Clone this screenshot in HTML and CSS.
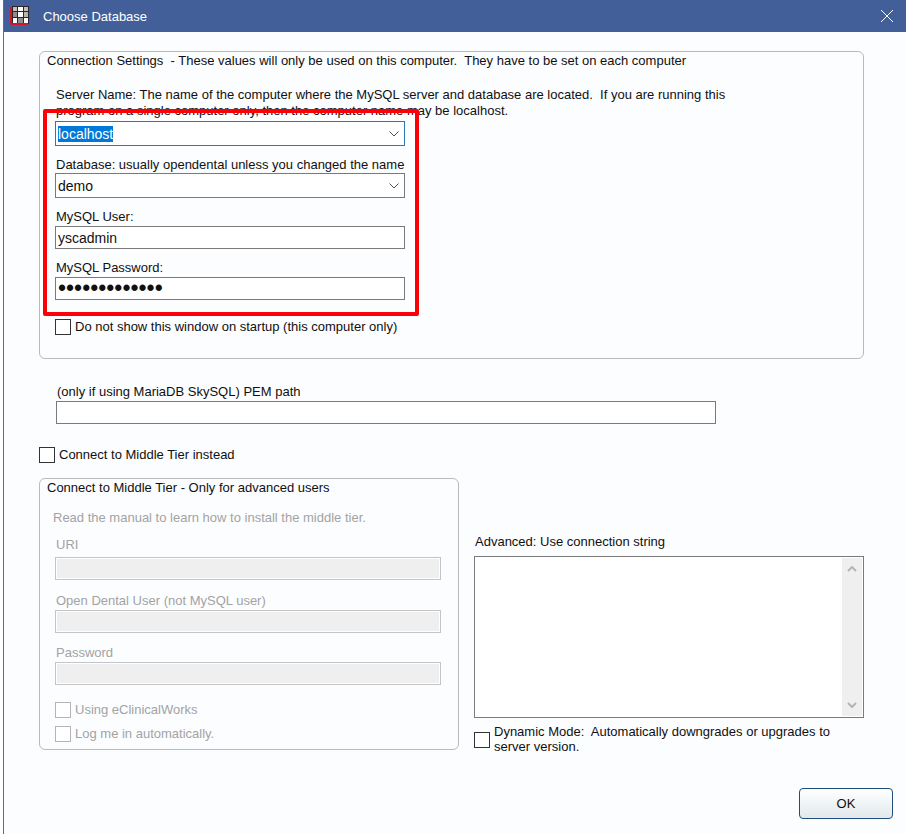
FILE: index.html
```html
<!DOCTYPE html>
<html lang="en">
<head>
<meta charset="utf-8">
<title>Choose Database</title>
<link rel="stylesheet" href="styles.css">
</head>
<body>
<div class="window">
  <header class="titlebar">
    <svg class="app-icon" viewBox="0 0 20 20" aria-hidden="true">
      <path d="M2 0H19V18H2z" fill="#2c2426"/>
      <path d="M0 1H2V17H18V19H2Q0 19 0 17Z" fill="#d8142c"/>
      <path d="M3 1h4v4H3zM14 1h4v4h-4z" fill="#c4c0c0"/>
      <path d="M8 1h5v4H8zM8 6h5v5H8zM3 12h4v5H3zM14 12h4v5h-4z" fill="#fff"/>
      <path d="M3 6h4v5H3zM8 12h5v5H8z" fill="#928c8c"/>
      <path d="M14 6h4v5h-4z" fill="#b8b4b4"/>
    </svg>
    <h1 class="title">Choose Database</h1>
    <button class="close" type="button" aria-label="Close">
      <svg viewBox="0 0 14 14" aria-hidden="true"><path d="M1 1L13 13M13 1L1 13"/></svg>
    </button>
  </header>

  <form class="content">
    <fieldset class="group">
      <legend>Connection Settings&nbsp; - These values will only be used on this computer.&nbsp; They have to be set on each computer</legend>
      <label class="intro" for="server">Server Name: The name of the computer where the MySQL server and database are located.&nbsp; If you are running this program on a single computer only, then the computer name may be localhost.</label>
      <div class="credentials">
        <div class="combo focused">
          <input id="server" type="text" value="localhost" list="servers">
          <datalist id="servers"><option value="localhost"></option></datalist>
          <svg class="chevron" viewBox="0 0 10 6" aria-hidden="true"><path d="M0.500 0.500L5 5L9.500 0.500"/></svg>
        </div>
        <div class="field tight">
          <label for="database">Database: usually opendental unless you changed the name</label>
          <div class="combo">
            <select id="database"><option>demo</option></select>
            <svg class="chevron" viewBox="0 0 10 6" aria-hidden="true"><path d="M0.500 0.500L5 5L9.500 0.500"/></svg>
          </div>
        </div>
        <div class="field">
          <label for="user">MySQL User:</label>
          <input class="text" id="user" type="text" value="yscadmin">
        </div>
        <div class="field">
          <label for="password">MySQL Password:</label>
          <input class="text secret" id="password" type="password" value="abcdefghijklm">
        </div>
        <div class="highlight"></div>
      </div>
      <label class="check"><input type="checkbox"> Do not show this window on startup (this computer only)</label>
    </fieldset>

    <div class="field pem">
      <label for="pem">(only if using MariaDB SkySQL) PEM path</label>
      <input class="text" id="pem" type="text">
    </div>

    <label class="check"><input type="checkbox"> Connect to Middle Tier instead</label>

    <div class="columns">
      <fieldset class="group tier" disabled>
        <legend>Connect to Middle Tier - Only for advanced users</legend>
        <p class="note">Read the manual to learn how to install the middle tier.</p>
        <div class="field uri">
          <label for="uri">URI</label>
          <input class="text" id="uri" type="text">
        </div>
        <div class="field">
          <label for="od-user">Open Dental User (not MySQL user)</label>
          <input class="text" id="od-user" type="text">
        </div>
        <div class="field">
          <label for="od-password">Password</label>
          <input class="text secret" id="od-password" type="password">
        </div>
        <div class="checks">
          <label class="check"><input type="checkbox"> Using eClinicalWorks</label>
          <label class="check"><input type="checkbox"> Log me in automatically.</label>
        </div>
      </fieldset>

      <div class="advanced">
        <label for="connection">Advanced: Use connection string</label>
        <div class="memo">
          <textarea id="connection"></textarea>
          <div class="scrollbar" aria-hidden="true">
            <svg viewBox="0 0 10 6"><path d="M1 5L5 1L9 5"/></svg>
            <svg viewBox="0 0 10 6"><path d="M1 1L5 5L9 1"/></svg>
          </div>
        </div>
        <label class="check dynamic"><input type="checkbox"> <span>Dynamic Mode:&nbsp; Automatically downgrades or upgrades to server version.</span></label>
      </div>
    </div>

    <footer class="actions">
      <button class="ok" type="button">OK</button>
    </footer>
  </form>
</div>
<script src="script.js"></script>
</body>
</html>
```

FILE: styles.css
```css
* {
  box-sizing: border-box;
}

body {
  margin: 0;
  padding-left: 3px;
  background: #fff;
  color: #101010;
  font: 13px/16px "Liberation Sans", Arial, sans-serif;
}

input,
select,
textarea,
button {
  margin: 0;
  font: inherit;
  color: inherit;
}

.window {
  min-height: 100vh;
  border-left: 1px solid #6a6a70;
  background: #fcfdff;
}

.titlebar {
  display: flex;
  align-items: center;
  height: 32px;
  padding: 0 12px 0 6px;
  background: #425f9a;
  color: #fff;
}

.app-icon {
  width: 20px;
  height: 20px;
}

.title {
  flex: 1;
  margin: 0 0 0 13px;
  padding-top: 1px;
  font-size: 13px;
  font-weight: normal;
}

.close {
  display: flex;
  padding: 0;
  border: 0;
  background: none;
}

.close svg {
  width: 14px;
  height: 14px;
  fill: none;
  stroke: #fff;
}

.content {
  padding: 19px 42px 15px 35px;
}

.group {
  min-width: 0;
  margin: 0;
  padding: 0 15px 23px;
  border: 1px solid #b9bac0;
  border-radius: 6px;
}

.group legend {
  float: left;
  width: 100%;
  margin: 0 0 18px -8px;
  padding: 1px 0 0;
}

.intro {
  display: block;
  clear: both;
  max-width: 700px;
  padding: 0 0 2px 1px;
}

.credentials {
  display: flex;
  flex-direction: column;
  gap: 10px;
  position: relative;
  max-width: 350px;
}

.highlight {
  position: absolute;
  inset: -12px -14px -16px -12px;
  border: 4px solid #fb0006;
  border-radius: 2px;
  pointer-events: none;
}

.field {
  display: flex;
  flex-direction: column;
  gap: 1px;
}

.field.tight {
  gap: 0;
}

.field label,
.advanced > label:first-child {
  padding: 1px 0 0 1px;
  white-space: nowrap;
}

.text {
  width: 100%;
  height: 23px;
  padding: 0 2px;
  border: 1px solid #7a7a7a;
  border-radius: 0;
  background: #fff;
  outline: 0;
  font-size: 14px;
}

.text.secret {
  font-size: 23px;
}

.combo {
  display: grid;
  align-items: center;
  height: 25px;
  border: 1px solid #7a7a7a;
  background: #fff;
  font-size: 14px;
}

.combo.focused {
  border-color: #2a78b4;
}

.combo input,
.combo select {
  grid-area: 1 / 1;
  appearance: none;
  width: 100%;
  height: 23px;
  padding: 0 2px;
  border: 0;
  background: none;
  outline: 0;
}

.combo input::-webkit-calendar-picker-indicator {
  display: none !important;
}

.combo input::selection {
  background: #0078d7;
  color: #fff;
}

.chevron {
  grid-area: 1 / 1;
  justify-self: end;
  width: 10px;
  height: 6px;
  margin-right: 5px;
  fill: none;
  stroke: #505050;
  pointer-events: none;
}

.check {
  display: flex;
  align-items: center;
  gap: 4px;
}

.check input {
  appearance: none;
  flex: none;
  width: 16px;
  height: 16px;
  border: 1px solid #333;
  background: #fff;
}

.credentials + .check {
  margin-top: 19px;
}

.pem {
  width: 80%;
  margin: 24px 0 23px 17px;
}

.columns {
  display: grid;
  grid-template-columns: 420fr 390fr;
  gap: 15px;
  align-items: start;
  margin-top: 15px;
}

.tier {
  padding: 0 17px 7px 15px;
  color: #a3a3a3;
}

.tier legend {
  margin-bottom: 14px;
  color: #101010;
}

.note {
  clear: both;
  margin: 0 0 10px -2px;
}

.tier .field {
  margin-bottom: 11px;
}

.tier .field.uri {
  gap: 4px;
  margin-bottom: 12px;
}

.tier .text {
  border-color: #c4c5c9;
  background: #efefef;
  box-shadow: inset 0 0 0 1px #fff;
}

.checks {
  display: flex;
  flex-direction: column;
  gap: 8px;
  margin-top: 17px;
}

.checks .check input {
  border-color: #b4b4b8;
}

.advanced {
  display: flex;
  flex-direction: column;
  padding-top: 55px;
}

.memo {
  display: flex;
  height: 162px;
  margin: 6px 0;
  padding: 1px;
  border: 1px solid #7a7a7a;
  background: #fff;
}

.memo textarea {
  flex: 1;
  min-width: 0;
  padding: 2px;
  border: 0;
  outline: 0;
  resize: none;
  background: none;
}

.scrollbar {
  display: flex;
  flex-direction: column;
  justify-content: space-between;
  align-items: center;
  width: 20px;
  padding: 8px 0;
  background: #efefef;
}

.scrollbar svg {
  width: 10px;
  height: 6px;
  fill: none;
  stroke: #b4b4b4;
  stroke-width: 2;
}

.dynamic {
  align-items: flex-end;
  line-height: 15px;
}

.dynamic input {
  margin-bottom: 6px;
}

.actions {
  display: flex;
  justify-content: flex-end;
  margin: 34px -29px 0 0;
}

.ok {
  width: 94px;
  height: 31px;
  border: 1px solid #1f4f7a;
  border-radius: 4px;
  background: linear-gradient(#fff, #e2e8ec);
}
```

FILE: script.js
```js
const server = document.getElementById("server");
server.focus();
server.select();
```
